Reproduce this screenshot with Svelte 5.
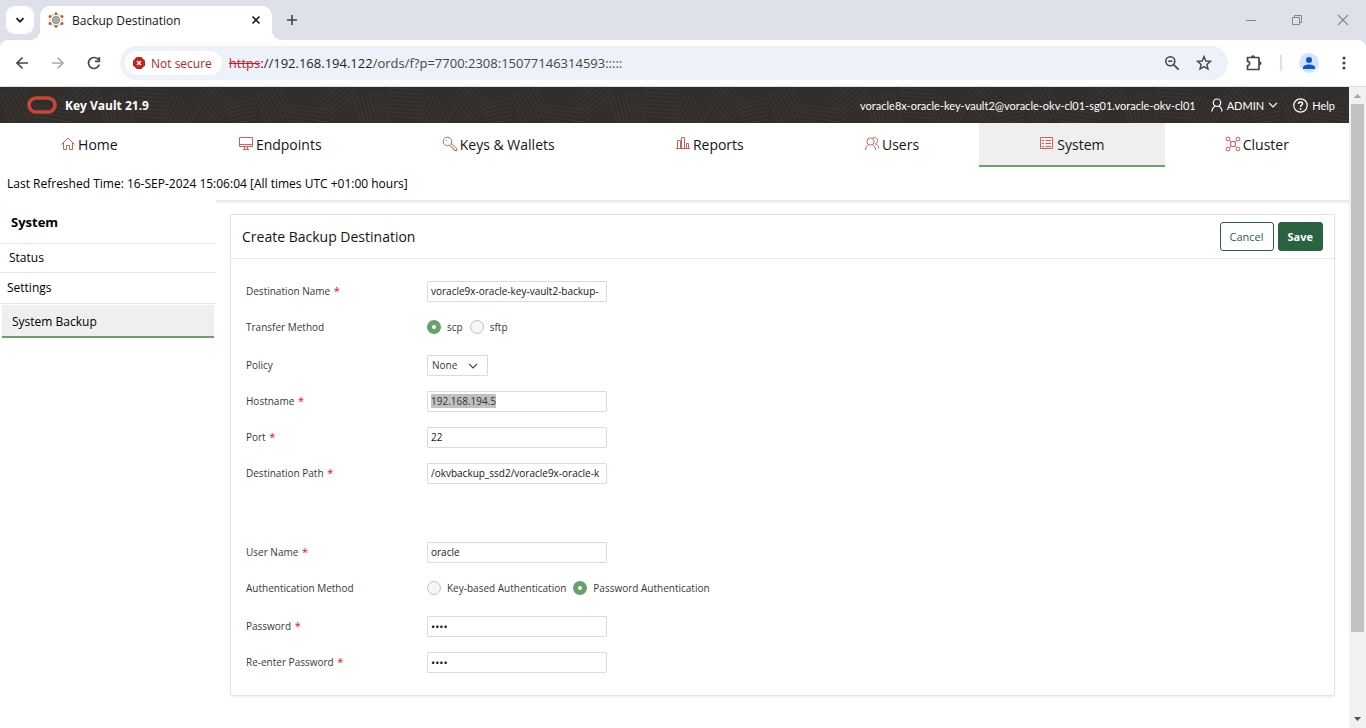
<script>
	import { onMount } from "svelte";

	const tabs = [
		{ name: "Home", icon: "home" },
		{ name: "Endpoints", icon: "endpoints" },
		{ name: "Keys & Wallets", icon: "key" },
		{ name: "Reports", icon: "reports" },
		{ name: "Users", icon: "users" },
		{ name: "System", icon: "system" },
		{ name: "Cluster", icon: "cluster" },
	];

	// hatch blocks of the banner texture: [x, y, angle]
	const hatches = [
		[0, 4, 62],
		[34, 20, 8],
		[62, -4, -40],
		[98, 10, 75],
		[132, 2, 4],
		[160, 16, -62],
		[196, 2, 48],
		[228, 14, -12],
	];
	const strokes = [0, 4, 8, 12, 16, 20, 24, 28];

	let activeTab = "System";
	let transfer = "scp";
	let auth = "password";
	let policy = "None";
	let destination = "voracle9x-oracle-key-vault2-backup-";
	let hostname = "192.168.194.5";
	let port = "22";
	let path = "/okvbackup_ssd2/voracle9x-oracle-k";
	let user = "oracle";
	let password = "pass";
	let passwordAgain = "pass";
	let hostInput;

	onMount(() => {
		hostInput.focus();
		hostInput.select();
	});
</script>

<div class="window">
	<div class="tab-strip">
		<button class="tab-search" aria-label="Search tabs">
			<svg width="10" height="10" viewBox="0 0 10 10"><path d="M1.5 3.2 5 6.7l3.5-3.5" fill="none" stroke="#1f1f1f" stroke-width="1.8" /></svg>
		</button>
		<div class="browser-tab">
			<svg width="16" height="16" viewBox="0 0 16 16">
				<path d="M8 1.5 14 4.5v7L8 14.5 2 11.5v-7z" fill="none" stroke="#d9a78c" stroke-dasharray="2 1" />
				<circle cx="8" cy="8" r="3.7" fill="#aaa" stroke="#949494" />
				<g fill="#b8622f">
					<circle cx="8" cy="1.7" r="1.5" /><circle cx="8" cy="14.3" r="1.5" />
					<circle cx="2" cy="4.4" r="1.5" /><circle cx="14" cy="4.4" r="1.5" />
					<circle cx="2" cy="11.4" r="1.5" /><circle cx="14" cy="11.4" r="1.5" />
				</g>
			</svg>
			<span>Backup Destination</span>
			<button class="plain" aria-label="Close tab">
				<svg width="10" height="10" viewBox="0 0 10 10"><path d="m1.5 1.5 7 7m0-7-7 7" stroke="#1f1f1f" stroke-width="1.6" /></svg>
			</button>
		</div>
		<button class="plain new-tab" aria-label="New tab">
			<svg width="12" height="12" viewBox="0 0 12 12"><path d="M6 1v10M1 6h10" stroke="#444" stroke-width="1.6" /></svg>
		</button>
		<div class="window-buttons">
			<button class="plain" aria-label="Minimize">
				<svg width="12" height="12" viewBox="0 0 12 12"><path d="M1 6.5h10" stroke="#858789" /></svg>
			</button>
			<button class="plain" aria-label="Restore">
				<svg width="12" height="12" viewBox="0 0 12 12"><path d="M1.5 3.5h7v7h-7zM3.5 3.5v-2h7v7h-2" fill="none" stroke="#858789" /></svg>
			</button>
			<button class="plain" aria-label="Close">
				<svg width="12" height="12" viewBox="0 0 12 12"><path d="m1 1 10 10M11 1 1 11" stroke="#858789" stroke-width="1.1" /></svg>
			</button>
		</div>
	</div>

	<div class="toolbar">
		<button class="plain" aria-label="Back">
			<svg width="14" height="14" viewBox="0 0 14 14"><path d="M13 7H2m5.5-5.5L2 7l5.5 5.5" fill="none" stroke="#474747" stroke-width="1.7" /></svg>
		</button>
		<button class="plain" aria-label="Forward">
			<svg width="14" height="14" viewBox="0 0 14 14"><path d="M1 7h11M6.5 1.5 12 7l-5.5 5.5" fill="none" stroke="#ababab" stroke-width="1.7" /></svg>
		</button>
		<button class="plain" aria-label="Reload">
			<svg width="14" height="14" viewBox="0 0 14 14"><path d="M12.3 8.5A5.5 5.5 0 1 1 11.5 3.8M12.3 1v4.4H8" fill="none" stroke="#474747" stroke-width="1.7" /></svg>
		</button>
		<div class="address">
			<button class="security">
				<svg width="12" height="12" viewBox="0 0 12 12"><path d="M3.7 0h4.6L12 3.7v4.6L8.3 12H3.7L0 8.3V3.7z" fill="#c5221f" /><path d="m4 4 4 4m0-4L4 8" stroke="#fff" stroke-width="1.4" /></svg>
				Not secure
			</button>
			<span class="url"><s>https</s><b>://192.168.194.122</b>/ords/f?p=7700:2308:15077146314593:::::</span>
			<button class="plain" aria-label="Zoom">
				<svg width="16" height="16" viewBox="0 0 16 16"><circle cx="6.3" cy="6.3" r="4.5" fill="none" stroke="#474747" stroke-width="1.6" /><path d="M4.2 6.3h4.2M9.6 9.6l5 5" stroke="#474747" stroke-width="1.6" /></svg>
			</button>
			<button class="plain" aria-label="Bookmark">
				<svg width="16" height="16" viewBox="0 0 16 16"><path d="M8 1.6 9.8 6l4.7.4-3.6 3.1 1.1 4.6L8 11.6l-4 2.5 1.1-4.6L1.5 6.4 6.2 6z" fill="none" stroke="#474747" stroke-width="1.4" /></svg>
			</button>
		</div>
		<div class="toolbar-end">
			<button class="plain" aria-label="Extensions">
				<svg width="18" height="18" viewBox="0 0 18 18"><path d="M2.5 3.5H14v12H2.5v-4c2.8 0 2.8-4.2 0-4.2z" fill="none" stroke="#474747" stroke-width="1.7" stroke-linejoin="round" /><path d="M6 3.2a2 2 0 0 1 4 0zM14.5 7.3a2 2 0 0 1 0 4z" fill="#474747" /></svg>
			</button>
			<i class="divider"></i>
			<button class="plain" aria-label="Profile">
				<svg width="20" height="20" viewBox="0 0 20 20"><circle cx="10" cy="10" r="10" fill="#d3e3fd" /><circle cx="10" cy="7" r="3" fill="#0b57d0" /><path d="M4 16v-1.5c0-2 3-3 6-3s6 1 6 3V16z" fill="#0b57d0" /></svg>
			</button>
			<button class="plain" aria-label="Menu">
				<svg width="16" height="16" viewBox="0 0 16 16" fill="#474747"><circle cx="8" cy="3" r="1.6" /><circle cx="8" cy="8" r="1.6" /><circle cx="8" cy="13" r="1.6" /></svg>
			</button>
		</div>
	</div>

	<div class="viewport">
		<div class="page">
			<header>
				<svg class="texture" width="100%" height="100%">
					<defs>
						<pattern id="hatch" width="256" height="36" patternUnits="userSpaceOnUse">
							{#each hatches as [x, y, angle]}
								<g transform="translate({x} {y}) rotate({angle} 18 14)">
									{#each strokes as s}
										<path d="M0 {s}h36" />
									{/each}
								</g>
							{/each}
						</pattern>
					</defs>
					<rect width="100%" height="100%" fill="url(#hatch)" stroke="none" />
				</svg>
				<svg class="logo" width="30" height="18" viewBox="0 0 30 18"><rect x="2" y="2" width="26" height="14" rx="7" fill="none" stroke="#c74634" stroke-width="3.6" /></svg>
				<strong>Key Vault 21.9</strong>
				<span class="host">voracle8x-oracle-key-vault2@voracle-okv-cl01-sg01.voracle-okv-cl01</span>
				<button class="account">
					<svg width="12" height="14" viewBox="0 0 12 14"><g fill="none" stroke="#fff" stroke-width="1.2"><circle cx="6" cy="4.7" r="3.7" /><path d="M1 13.5c0-3 1.5-4.5 3.2-5.3M11 13.5c0-3-1.5-4.5-3.2-5.3" /></g></svg>
					<span>ADMIN</span>
					<svg width="10" height="6" viewBox="0 0 10 6"><path d="m1 .8 4 4 4-4" fill="none" stroke="#fff" stroke-width="1.2" /></svg>
				</button>
				<a class="help" href="#help">
					<svg width="15" height="15" viewBox="0 0 15 15"><g fill="none" stroke="#fff"><circle cx="7.5" cy="7.5" r="6.7" stroke-width="1.2" /><path d="M5.5 6c0-2.8 4-2.6 4-.2 0 1.5-2 1.5-2 3.2" stroke-width="1.5" /></g><circle cx="7.5" cy="11" r=".9" fill="#fff" /></svg>
					Help
				</a>
			</header>

			<nav class="tabs">
				{#each tabs as tab}
					<a href="#{tab.icon}" class:active={tab.name === activeTab}>
						<svg width="16" height="16" viewBox="0 0 16 16">
							{#if tab.icon === "home"}
								<path d="M1.5 8.5 8 2l6.5 6.5M3.5 7v6.5h3v-4h3v4h3V7" />
							{:else if tab.icon === "endpoints"}
								<path d="M1.5 1.5h13v9h-13zM1.5 8.5h13M6.5 10.5v3M9.5 10.5v3M5 13.5h6" />
							{:else if tab.icon === "key"}
								<circle cx="5.5" cy="5.5" r="4.3" /><path d="M4 4.5h1M9 7.5l5.5 4.5.5 2.5h-2.5L12 13l-1.5-.5L10 11l-1.5-.5-1-1" />
							{:else if tab.icon === "reports"}
								<path d="M1 12.5h14M2.5 12V4.5h3V12M6.500 12V1.500h3V12M11.500 12V7.500h2V12" />
							{:else if tab.icon === "users"}
								<circle cx="6.5" cy="5.5" r="3.6" /><path d="M1.5 14c0-3 1.500-4.500 3-5M11.500 14c0-3-1.500-4.500-3-5M8.500 2.200C10 .5 13.500 1.500 13.500 4.500c0 2-1 3-2.200 3.500 2.200.5 3.200 2 3.500 4.500" />
							{:else if tab.icon === "system"}
								<path d="M1.5 1.5h12v11h-12zM3 4.5h2M6.5 4.5H12M3 7.5h2M6.5 7.5H12M3 10.5h2M6.5 10.5H12" />
							{:else}
								<circle cx="3" cy="3" r="1.9" /><circle cx="13" cy="3" r="1.9" /><circle cx="3" cy="13" r="1.9" /><circle cx="13" cy="13" r="1.9" /><circle cx="8" cy="8" r="2.7" /><path d="m4.3 4.3 2 2M11.7 4.3l-2 2M4.3 11.7l2-2M11.7 11.7l-2-2" />
							{/if}
						</svg>
						<span>{tab.name}</span>
					</a>
				{/each}
			</nav>

			<p class="refreshed">Last Refreshed Time: 16-SEP-2024 15:06:04 [All times UTC +01:00 hours]</p>

			<div class="body">
				<aside>
					<h2>System</h2>
					<a class="status" href="#status">Status</a>
					<a class="settings" href="#settings">Settings</a>
					<a class="current" href="#backup">System Backup</a>
				</aside>

				<main>
					<form class="card" on:submit|preventDefault>
						<div class="card-head">
							<h1>Create Backup Destination</h1>
							<button type="button" class="btn">Cancel</button>
							<button type="submit" class="btn btn-save">Save</button>
						</div>
						<div class="fields">
							<div class="row">
								<label for="destination">Destination Name <em>*</em></label>
								<input id="destination" type="text" bind:value={destination} />
							</div>
							<div class="row radios">
								<span>Transfer Method</span>
								<div class="options">
									<label><input type="radio" value="scp" bind:group={transfer} />scp</label>
									<label><input type="radio" value="sftp" bind:group={transfer} />sftp</label>
								</div>
							</div>
							<div class="row">
								<label for="policy">Policy</label>
								<div class="select">
									<select id="policy" bind:value={policy}>
										<option>None</option>
									</select>
									<svg width="10" height="6" viewBox="0 0 10 6"><path d="m1 .8 4 4 4-4" fill="none" stroke="#444" stroke-width="1.2" /></svg>
								</div>
							</div>
							<div class="row">
								<label for="hostname">Hostname <em>*</em></label>
								<input id="hostname" type="text" bind:value={hostname} bind:this={hostInput} />
							</div>
							<div class="row">
								<label for="port">Port <em>*</em></label>
								<input id="port" type="text" bind:value={port} />
							</div>
							<div class="row">
								<label for="path">Destination Path <em>*</em></label>
								<input id="path" type="text" bind:value={path} />
							</div>
							<div class="row credentials">
								<label for="user">User Name <em>*</em></label>
								<input id="user" type="text" bind:value={user} />
							</div>
							<div class="row radios">
								<span>Authentication Method</span>
								<div class="options">
									<label><input type="radio" value="key" bind:group={auth} />Key-based Authentication</label>
									<label><input type="radio" value="password" bind:group={auth} />Password Authentication</label>
								</div>
							</div>
							<div class="row">
								<label for="password">Password <em>*</em></label>
								<input id="password" type="password" bind:value={password} />
							</div>
							<div class="row">
								<label for="password-again">Re-enter Password <em>*</em></label>
								<input id="password-again" type="password" bind:value={passwordAgain} />
							</div>
						</div>
					</form>
				</main>
			</div>
		</div>

		<div class="scrollbar">
			<svg width="17" height="17" viewBox="0 0 17 17"><path d="M5 11h7L8.5 7z" fill="#a3a3a3" /></svg>
			<div class="track"><div class="thumb"></div></div>
			<svg width="17" height="17" viewBox="0 0 17 17"><path d="M5 6h7l-3.5 4z" fill="#505050" /></svg>
		</div>
	</div>
</div>

<style>
	:global(body) {
		background: white;
	}

	.window {
		height: 100vh;
		display: flex;
		flex-direction: column;
		overflow: hidden;
		font-family: "Open Sans", "Noto Sans", sans-serif;
		font-size: 12px;
		color: #161513;
		background: #dee1e9;
	}

	button,
	input,
	select {
		font: inherit;
		color: inherit;
	}

	svg {
		display: block;
		flex: none;
	}

	a {
		color: inherit;
		text-decoration: none;
	}

	.plain {
		display: flex;
		padding: 0;
		border: none;
		background: none;
	}

	/* Browser */
	.tab-strip {
		display: flex;
		align-items: center;
		height: 40px;
		padding-left: 6px;
	}

	.tab-search {
		display: grid;
		place-items: center;
		width: 28px;
		height: 28px;
		padding: 0;
		border: none;
		border-radius: 9px;
		background: white;
	}

	.browser-tab {
		box-sizing: border-box;
		align-self: flex-end;
		position: relative;
		display: flex;
		align-items: center;
		gap: 8px;
		width: 232px;
		height: 34px;
		margin-left: 6px;
		padding: 0 11px 6px 8px;
		border-radius: 10px 10px 0 0;
		background: white;
	}

	.browser-tab::before,
	.browser-tab::after {
		content: "";
		position: absolute;
		bottom: 0;
		width: 10px;
		height: 10px;
	}

	.browser-tab::before {
		right: 100%;
		background: radial-gradient(circle at 0 0, transparent 10px, white 10px);
	}

	.browser-tab::after {
		left: 100%;
		background: radial-gradient(circle at 100% 0, transparent 10px, white 10px);
	}

	.browser-tab span {
		flex: 1;
	}

	.new-tab {
		margin-left: 14px;
	}

	.window-buttons {
		display: flex;
		gap: 34px;
		margin-left: auto;
		padding-right: 17px;
	}

	.toolbar {
		box-sizing: border-box;
		display: flex;
		align-items: center;
		gap: 22px;
		height: 47px;
		padding: 0 14px 0 15px;
		border-bottom: 1px solid #dfe3df;
		border-radius: 8px 8px 0 0;
		background: white;
	}

	.address {
		box-sizing: border-box;
		display: flex;
		flex: 1;
		align-items: center;
		gap: 16px;
		height: 34px;
		margin-left: -3px;
		padding: 0 16px 0 5px;
		border-radius: 17px;
		background: #edf1fa;
	}

	.security {
		display: flex;
		align-items: center;
		gap: 6px;
		height: 24px;
		margin-right: -9px;
		padding: 0 10px 0 8px;
		border: none;
		border-radius: 12px;
		background: white;
		color: #b3261e;
	}

	.url {
		flex: 1;
		font-size: 13px;
		color: #474747;
	}

	.url b {
		font-weight: 400;
		color: #1f1f1f;
	}

	.url s {
		color: #c5221f;
	}

	.toolbar-end {
		display: flex;
		align-items: center;
		gap: 17px;
		margin-left: -5px;
	}

	.divider {
		width: 2px;
		height: 16px;
		background: #d3e3fd;
	}

	.viewport {
		flex: 1;
		display: flex;
		min-height: 0;
	}

	.page {
		flex: 1;
		display: flex;
		flex-direction: column;
		min-width: 0;
		background: white;
	}

	.scrollbar {
		display: flex;
		flex-direction: column;
		width: 17px;
		background: #f1f1f1;
	}

	.track {
		flex: 1;
		padding: 0 2px;
	}

	.thumb {
		height: 87%;
		background: #c1c1c1;
	}

	/* Banner */
	header {
		position: relative;
		display: flex;
		align-items: center;
		height: 36px;
		padding: 0 14px 0 27px;
		background: #312d2a;
		color: white;
		font-family: Lato, "Open Sans", sans-serif;
		font-size: 11px;
	}

	.texture {
		position: absolute;
		inset: 0;
		stroke: #3b3734;
		stroke-width: 1;
	}

	.logo,
	header strong,
	.host,
	.account,
	.help {
		position: relative;
	}

	header strong {
		margin-left: 8px;
		font-family: "Open Sans", sans-serif;
		font-size: 12px;
	}

	.host {
		margin-left: auto;
	}

	.account {
		display: flex;
		align-items: center;
		gap: 4px;
		margin-left: 15px;
		padding: 0;
		border: none;
		background: none;
	}

	.help {
		display: flex;
		align-items: center;
		gap: 4px;
		margin-left: 15px;
	}

	/* Tabs */
	.tabs {
		display: flex;
		font-size: 14px;
	}

	.tabs a {
		box-sizing: border-box;
		display: flex;
		flex: 1 1 auto;
		align-items: center;
		justify-content: center;
		gap: 2px;
		height: 44px;
		border-bottom: 2px solid transparent;
	}

	.tabs a.active {
		border-color: #6aa06c;
		background: #efefef;
	}

	.tabs svg {
		fill: none;
		stroke: #cb605a;
		stroke-width: 1;
	}

	.refreshed {
		margin: 0;
		padding-left: 7px;
		line-height: 33px;
		color: black;
	}

	.body {
		display: flex;
		flex: 1;
	}

	/* Sidebar */
	aside {
		display: flex;
		flex-direction: column;
		width: 216px;
		color: black;
	}

	aside h2 {
		margin: 0;
		padding: 1px 0 0 11px;
		border-bottom: 1px solid #e5e5e5;
		font-size: 13px;
		line-height: 42px;
	}

	aside a {
		padding-left: 9px;
		border-bottom: 1px solid #e5e5e5;
		line-height: 28px;
	}

	aside .settings {
		padding-left: 7px;
		line-height: 30px;
	}

	aside .current {
		margin: 1px 2px;
		padding: 3px 0 0 10px;
		border-bottom: 2px solid #6aa06c;
		background: #efefef;
		line-height: 28px;
	}

	/* Form */
	main {
		flex: 1;
		padding: 13px 14px 0;
		border-top: 1px solid #e8e8e8;
		box-shadow: inset 0 3px 3px -2px #e4e4e4;
	}

	.card {
		border: 1px solid #e4e4e4;
		border-radius: 2px;
		box-shadow: 0 1px 2px #eee;
	}

	.card-head {
		display: flex;
		align-items: center;
		gap: 4px;
		height: 43px;
		padding: 0 11px;
		border-bottom: 1px solid #e8e8e8;
	}

	.card-head h1 {
		flex: 1;
		margin: 0;
		font-size: 14px;
		font-weight: 400;
	}

	.btn {
		height: 29px;
		padding: 0 9px;
		border: 1px solid #2b6242;
		border-radius: 3px;
		background: white;
		color: #2b6242;
		font-size: 11px;
	}

	.btn-save {
		background: #2b6242;
		color: white;
		font-weight: 700;
	}

	.fields {
		padding: 14px 15px 15px;
		font-size: 10px;
		color: #3a3836;
	}

	.row {
		display: grid;
		grid-template-columns: 181px 1fr;
		align-items: center;
		min-height: 36px;
	}

	.radios {
		margin-bottom: 2px;
	}

	.credentials {
		margin-top: 43px;
	}

	em {
		margin-left: 1px;
		color: #f00;
		font-size: 11px;
		font-style: normal;
		line-height: 10px;
	}

	input[type="text"],
	input[type="password"] {
		box-sizing: border-box;
		width: 180px;
		height: 21px;
		padding: 0 2px 0 3px;
		border: 1px solid #dfdccf;
		border-radius: 1px;
		outline: none;
		background: white;
		color: #161513;
	}

	input[type="password"] {
		font-size: 11px;
	}

	input::selection {
		background: #c0c0c0;
		color: #333;
	}

	.options {
		display: flex;
		gap: 7px;
	}

	.options label {
		display: flex;
		align-items: center;
		gap: 6px;
	}

	input[type="radio"] {
		appearance: none;
		box-sizing: border-box;
		width: 14px;
		height: 14px;
		margin: 0;
		border: 1px solid #c4c2bd;
		border-radius: 50%;
		background: #f7f6f3;
	}

	input[type="radio"]:checked {
		border: 5px solid #6aa06c;
		background: white;
	}

	.select {
		position: relative;
		justify-self: start;
	}

	select {
		appearance: none;
		display: block;
		width: 61px;
		height: 21px;
		padding: 0 4px;
		border: 1px solid #dfdccf;
		border-radius: 1px;
		background: white;
	}

	.select svg {
		position: absolute;
		top: 8px;
		right: 10px;
		pointer-events: none;
	}
</style>
